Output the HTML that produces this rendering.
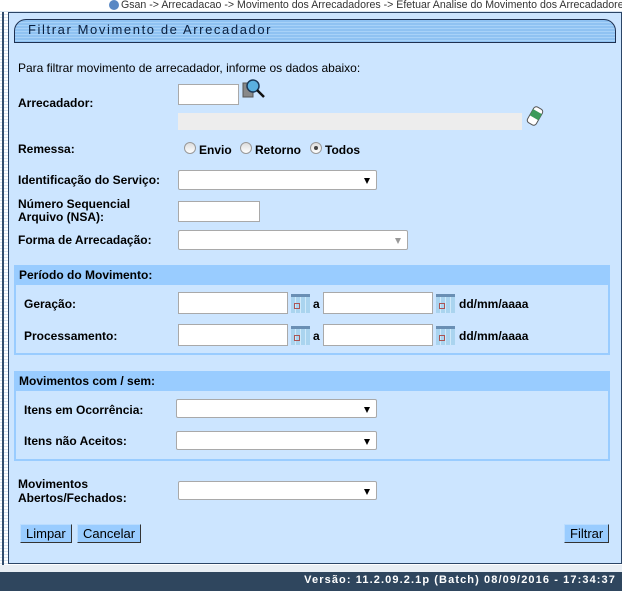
<!DOCTYPE html>
<html><head><meta charset="utf-8"><style>
*{box-sizing:border-box}
body{margin:0;width:622px;height:591px;overflow:hidden;background:repeating-linear-gradient(#fff 0 2px,#d8e4f0 2px 3px);font-family:"Liberation Sans",Arial,sans-serif;font-size:12px;color:#000;position:relative}
.a{position:absolute}
.lbl{font-weight:bold;font-size:12px}
.in{position:absolute;background:#fff;border:1px solid #a9a9a9;height:22px}
.sel{position:absolute;background:#fff;border:1px solid #a9a9a9;border-radius:2px;height:20px}
.sel:after{content:"";position:absolute;right:6px;top:7px;border-left:3.5px solid transparent;border-right:3.5px solid transparent;border-top:6px solid #000}
.sel.dis:after{border-top-color:#999}
.btn{position:absolute;background:#99ccff;border:1px solid #333;border-top-color:#bbddff;border-left-color:#bbddff;height:19px;font-size:13px;padding:1px 5px;line-height:16px}
.cal{position:absolute;width:19px;height:19px;background:repeating-linear-gradient(90deg,#aad4ef 0 4px,#cfe9fa 4px 5px);border-top:3px solid #6a8fb4}
.cal:after{content:"";position:absolute;left:3px;top:6px;width:4px;height:4px;border:1px solid #a55}
.rad{position:absolute;width:12px;height:12px;border-radius:50%;border:1px solid #999;background:linear-gradient(#ddd,#fff)}
</style></head><body>
<div class="a" style="left:2px;top:12px;width:2px;height:553px;background:#334e6d"></div>
<div class="a" style="left:0;top:0;width:622px;height:11px;background:#fff"></div>
<div class="a" style="left:109px;top:0;width:10px;height:10px;border-radius:50%;background:#5a88c4"></div>
<div class="a" style="left:121px;top:-1px;font-size:10.6px;color:#333;white-space:nowrap">Gsan -&gt; Arrecadacao -&gt; Movimento dos Arrecadadores -&gt; Efetuar Analise do Movimento dos Arrecadadores</div>
<div class="a" style="left:8px;top:12px;width:614px;height:552px;background:#cce5ff;border:1px solid #2b4566"></div>
<div class="a" style="left:14px;top:19px;width:602px;height:24px;border:1px solid #1e3050;border-radius:12px 12px 0 0;background:repeating-linear-gradient(#8fc2f2 0 2px,#a8d2f8 2px 3px)"></div>
<div class="a" style="left:28px;top:22px;font-size:13px;letter-spacing:1.6px;color:#0a1f3e">Filtrar Movimento de Arrecadador</div>
<div class="a" style="left:18px;top:61px;font-size:12px">Para filtrar movimento de arrecadador, informe os dados abaixo:</div>
<div class="a lbl" style="left:18px;top:96px">Arrecadador:</div>
<div class="in" style="left:178px;top:84px;width:61px;height:21px"></div>
<svg class="a" style="left:241px;top:77px" width="26" height="24"><rect x="2" y="6" width="10" height="14" fill="#888" stroke="#555"/><circle cx="12" cy="9" r="6" fill="#5ab0e0" stroke="#1a3a5a" stroke-width="1.5"/><line x1="16" y1="13" x2="23" y2="20" stroke="#111" stroke-width="2.5"/></svg>
<div class="a" style="left:178px;top:113px;width:344px;height:17px;background:#ededed"></div>
<svg class="a" style="left:526px;top:105px" width="18" height="22"><g transform="rotate(30 9 11)"><rect x="4" y="2" width="10" height="18" rx="3" fill="#fff" stroke="#555"/><rect x="4" y="6" width="10" height="7" fill="#3a9a5a"/></g></svg>
<div class="a lbl" style="left:18px;top:142px">Remessa:</div>
<div class="rad" style="left:184px;top:142px"></div><div class="a lbl" style="left:199px;top:143px">Envio</div>
<div class="rad" style="left:240px;top:142px"></div><div class="a lbl" style="left:255px;top:143px">Retorno</div>
<div class="rad" style="left:310px;top:142px"><div style="width:4px;height:4px;background:#444;border-radius:50%;margin:3px"></div></div><div class="a lbl" style="left:325px;top:143px">Todos</div>
<div class="a lbl" style="left:18px;top:173px">Identificação do Serviço:</div>
<div class="sel" style="left:178px;top:170px;width:199px"></div>
<div class="a lbl" style="left:18px;top:198px;line-height:13px">Número Sequencial<br>Arquivo (NSA):</div>
<div class="in" style="left:178px;top:201px;width:82px;height:21px"></div>
<div class="a lbl" style="left:18px;top:233px">Forma de Arrecadação:</div>
<div class="sel dis" style="left:178px;top:230px;width:230px"></div>
<div class="a" style="left:14px;top:265px;width:596px;height:90px;border:2px solid #99ccff"></div>
<div class="a" style="left:14px;top:265px;width:596px;height:20px;background:#99ccff"></div>
<div class="a lbl" style="left:19px;top:268px">Período do Movimento:</div>
<div class="a lbl" style="left:24px;top:297px">Geração:</div>
<div class="in" style="left:178px;top:292px;width:110px"></div><div class="cal" style="left:291px;top:294px"></div><div class="a lbl" style="left:313px;top:297px">a</div>
<div class="in" style="left:323px;top:292px;width:110px"></div><div class="cal" style="left:436px;top:294px"></div><div class="a lbl" style="left:459px;top:297px">dd/mm/aaaa</div>
<div class="a lbl" style="left:24px;top:329px">Processamento:</div>
<div class="in" style="left:178px;top:324px;width:110px"></div><div class="cal" style="left:291px;top:326px"></div><div class="a lbl" style="left:313px;top:329px">a</div>
<div class="in" style="left:323px;top:324px;width:110px"></div><div class="cal" style="left:436px;top:326px"></div><div class="a lbl" style="left:459px;top:329px">dd/mm/aaaa</div>
<div class="a" style="left:14px;top:371px;width:596px;height:90px;border:2px solid #99ccff"></div>
<div class="a" style="left:14px;top:371px;width:596px;height:20px;background:#99ccff"></div>
<div class="a lbl" style="left:19px;top:374px">Movimentos com / sem:</div>
<div class="a lbl" style="left:24px;top:403px">Itens em Ocorrência:</div>
<div class="sel" style="left:176px;top:399px;width:201px;height:19px"></div>
<div class="a lbl" style="left:24px;top:434px">Itens não Aceitos:</div>
<div class="sel" style="left:176px;top:431px;width:201px;height:19px"></div>
<div class="a lbl" style="left:18px;top:477px;line-height:14px">Movimentos<br>Abertos/Fechados:</div>
<div class="sel" style="left:178px;top:481px;width:199px;height:19px"></div>
<div class="btn" style="left:20px;top:524px">Limpar</div>
<div class="btn" style="left:77px;top:524px">Cancelar</div>
<div class="btn" style="left:564px;top:524px">Filtrar</div>
<div class="a" style="left:0;top:565px;width:622px;height:7px;background:#e8eef4"></div>
<div class="a" style="left:0;top:572px;width:622px;height:19px;background:#2f465e"></div>
<div class="a" style="right:6px;top:574px;color:#fff;font-weight:bold;font-size:11px;letter-spacing:1.1px">Versão: 11.2.09.2.1p (Batch) 08/09/2016 - 17:34:37</div>
</body></html>
